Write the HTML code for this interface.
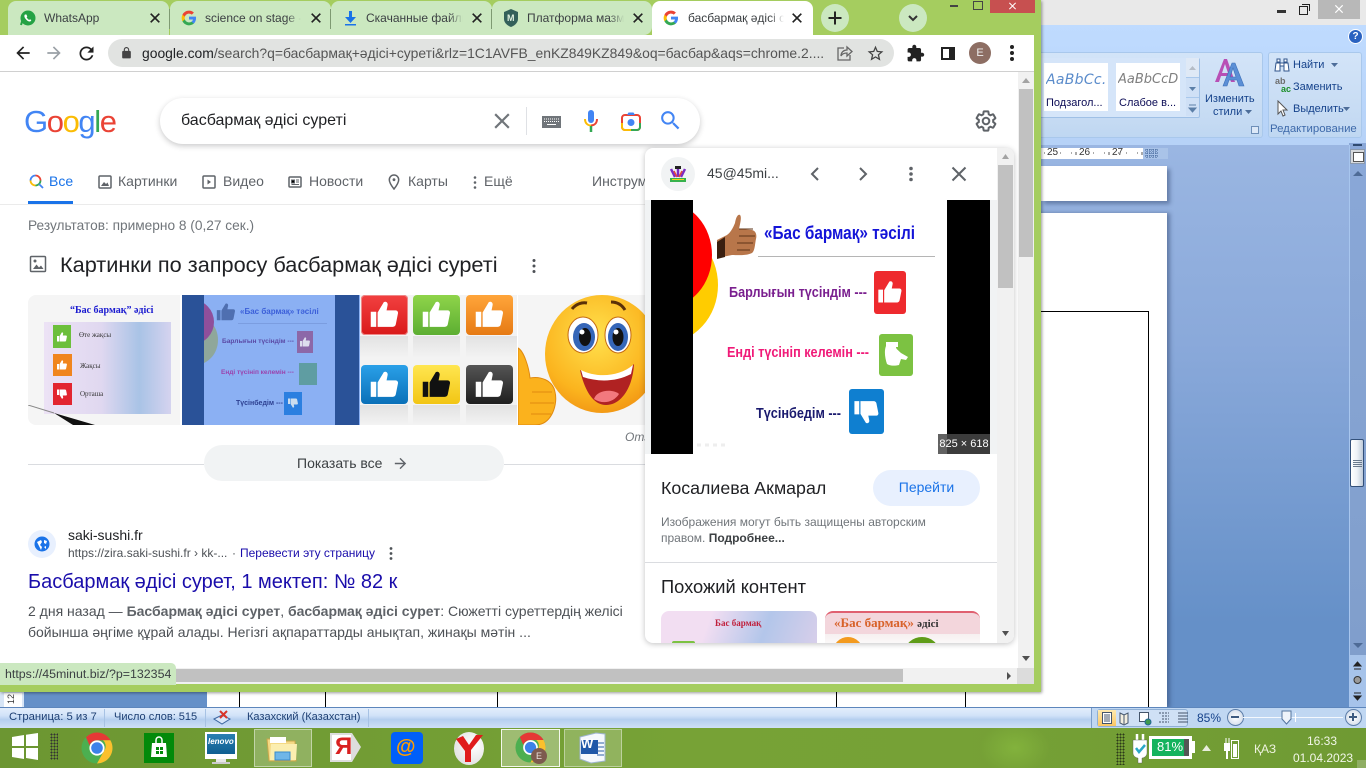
<!DOCTYPE html>
<html><head><meta charset="utf-8"><style>
html,body{margin:0;padding:0;width:1366px;height:768px;overflow:hidden;background:#fff;font-family:"Liberation Sans","Noto Sans CJK SC",sans-serif}
div,span.t,svg.a{position:absolute}
.t{position:absolute;white-space:nowrap;line-height:16px}
.r{color:#15428b;font-size:11px}
svg{display:block}
</style></head><body>
<svg width="0" height="0" style="position:absolute"><defs>
<symbol id="g" viewBox="0 0 24 24"><path fill="#4285F4" d="M22.56 12.25c0-.78-.07-1.53-.2-2.25H12v4.26h5.92c-.26 1.37-1.04 2.53-2.21 3.31v2.77h3.57c2.08-1.92 3.28-4.74 3.28-8.09z"/><path fill="#34A853" d="M12 23c2.97 0 5.46-.98 7.28-2.66l-3.57-2.77c-.98.66-2.23 1.06-3.71 1.06-2.86 0-5.29-1.93-6.16-4.53H2.18v2.84C3.99 20.53 7.7 23 12 23z"/><path fill="#FBBC05" d="M5.84 14.09c-.22-.66-.35-1.36-.35-2.09s.13-1.43.35-2.09V7.07H2.18C1.43 8.55 1 10.22 1 12s.43 3.45 1.18 4.93l2.85-2.22.81-.62z"/><path fill="#EA4335" d="M12 5.38c1.62 0 3.06.56 4.21 1.64l3.15-3.15C17.45 2.09 14.97 1 12 1 7.7 1 3.99 3.47 2.18 7.07l3.66 2.84c.87-2.6 3.3-4.53 6.16-4.53z"/></symbol>
<symbol id="x" viewBox="0 0 24 24"><path d="M19 6.41L17.59 5 12 10.59 6.41 5 5 6.41 10.59 12 5 17.59 6.41 19 12 13.41 17.59 19 19 17.59 13.41 12z"/></symbol>
<symbol id="th" viewBox="0 0 24 24"><path d="M2 10h4v11H2zM7 10.500L11.500 3c1.500-.8 3 .3 2.800 2L13.500 9H20c1.300 0 2 1 1.800 2.200l-1.600 8C20 20.300 19 21 18 21H7z"/></symbol>
<symbol id="chrome" viewBox="0 0 32 32"><circle cx="16" cy="16" r="15.500" fill="#4caf50"/><path d="M5 5.200A15.500 15.500 0 0 1 16 .5a15.500 15.500 0 0 1 13.400 7.700H16a8 8 0 0 0-7.500 5z" fill="#e53935"/><path d="M29.400 8.200A15.500 15.500 0 0 1 16 31.500L23 19a8 8 0 0 0-1-10.800z" fill="#fbc02d"/><circle cx="16" cy="16" r="7.600" fill="#fff"/><circle cx="16" cy="16" r="5.800" fill="#3b82e8"/></symbol>
</defs></svg>

<!-- WORD WINDOW -->
<div style="left:0;top:0;width:1366px;height:25px;background:#e9e9e9"></div>
<div style="left:1041px;top:25px;width:325px;height:120px;background:linear-gradient(#bfdbff,#b6d2f7)"></div>
<div style="left:1041px;top:145px;width:325px;height:563px;background:linear-gradient(#9ab6e2,#8aa9da 35%,#6590c8 85%)"></div>
<div style="left:1277px;top:10px;width:9px;height:3px;background:#333"></div>
<div style="left:1299px;top:6px;width:7px;height:7px;border:1px solid #222;background:#e9e9e9"></div>
<div style="left:1302px;top:4px;width:7px;height:6px;border:1px solid #222;border-bottom:0;border-left:0"></div>
<div style="left:1318px;top:0;width:42px;height:19px;background:#b8b8b8"></div>
<svg class="a" style="left:1332px;top:2px;fill:#fff" width="14" height="14"><use href="#x"/></svg>
<div style="left:1348px;top:29px;width:13px;height:13px;border-radius:50%;background:#2a62c0;border:1px solid #fff;color:#fff;font-size:10px;font-weight:bold;text-align:center;line-height:13px">?</div>
<!-- ribbon groups -->
<div style="left:1041px;top:52px;width:222px;height:86px;background:linear-gradient(#d3e4f8,#c6dbf3 75%,#bfd7f2);border:1px solid #a9c8ec;border-left:0;border-radius:0 3px 3px 0;box-sizing:border-box"></div>
<div style="left:1041px;top:58px;width:158px;height:59px;background:#d5e5f9;border-bottom:1px solid #9fc0e6;border-right:1px solid #9fc0e6;border-radius:0 2px 2px 0"></div>
<div style="left:1044px;top:63px;width:64px;height:48px;background:#fff"></div>
<div style="left:1116px;top:63px;width:64px;height:48px;background:#fff"></div>
<span class="t" style="left:1046px;top:72px;font:italic 14px/16px 'DejaVu Sans',sans-serif;color:#5b8ccb;width:61px;overflow:hidden;letter-spacing:.3px">AaBbCc.</span>
<span class="t" style="left:1118px;top:72px;font:italic 13px/16px 'DejaVu Sans',sans-serif;color:#7f7f7f;width:60px;overflow:hidden">AaBbCcDc</span>
<span class="t" style="left:1046px;top:95px;font-size:11px;color:#0b0b55">Подзагол...</span>
<span class="t" style="left:1119px;top:95px;font-size:11px;color:#0b0b55">Слабое в...</span>
<div style="left:1186px;top:58px;width:13px;height:19px;background:#dfe9f6;border-bottom:1px solid #a9c8ec"></div>
<div style="left:1186px;top:78px;width:13px;height:19px;background:#cfe0f6;border-bottom:1px solid #a9c8ec"></div>
<div style="left:1186px;top:98px;width:13px;height:18px;background:#cfe0f6"></div>
<svg class="a" style="left:1186px;top:58px" width="13" height="58"><path d="M3 12l3.500-4 3.500 4z" fill="#b5bcc6"/><path d="M3 29h7l-3.500 4z" fill="#5c7fa8"/><path d="M3 47h7M3 50h7l-3.500 4z" stroke="#5c7fa8" fill="#5c7fa8"/></svg>
<svg class="a" style="left:1214px;top:57px" width="34" height="32"><path d="M1 25L10 2h3l8 23h-4l-2-6H7l-2 6zM8 16h6l-3-9z" fill="#b84fb5"/><path d="M9 29L18 6h3l9 23h-5l-2-6h-8l-2 6zM16 20h6l-3-9z" fill="#5b8fd6" stroke="#3d70b8" stroke-width=".6"/></svg>
<span class="t r" style="left:1205px;top:91px">Изменить</span>
<span class="t r" style="left:1213px;top:104px">стили</span>
<svg class="a" style="left:1245px;top:110px" width="7" height="4"><path d="M0 0h7L3.500 4z" fill="#4d6d99"/></svg>
<div style="left:1251px;top:126px;width:6px;height:6px;border:1px solid #6e8fb8;background:#dce8f7"></div>
<div style="left:1268px;top:52px;width:94px;height:86px;background:linear-gradient(#d3e4f8,#c6dbf3 75%,#bfd7f2);border:1px solid #a9c8ec;border-radius:3px;box-sizing:border-box"></div>
<svg class="a" style="left:1274px;top:57px" width="16" height="15"><path d="M2 6h4v8H1zM10 6h4l1 8h-5zM3 2h3v3H3zM10 2h3v3h-3zM6 6h4v3H6z" fill="#fff" stroke="#30558c"/></svg>
<span class="t r" style="left:1293px;top:57px">Найти</span>
<svg class="a" style="left:1331px;top:63px" width="7" height="4"><path d="M0 0h7L3.500 4z" fill="#4d6d99"/></svg>
<span class="t" style="left:1275px;top:76px;font:bold 9px/10px 'Liberation Sans';color:#6d6d6d">ab</span>
<span class="t" style="left:1281px;top:84px;font:bold 9px/10px 'Liberation Sans';color:#1c8f2a">ac</span>
<span class="t r" style="left:1293px;top:79px">Заменить</span>
<svg class="a" style="left:1277px;top:100px" width="12" height="18"><path d="M1 1v13l3-3 2 5 2-1-2-5h4z" fill="#fff" stroke="#555"/></svg>
<span class="t r" style="left:1293px;top:101px">Выделить</span>
<svg class="a" style="left:1343px;top:107px" width="7" height="4"><path d="M0 0h7L3.500 4z" fill="#4d6d99"/></svg>
<span class="t" style="left:1270px;top:121px;font-size:11.400px;color:#3e6aaa">Редактирование</span>
<!-- ruler -->
<div style="left:1041px;top:148px;width:127px;height:11px;background:#fff"></div>
<div style="left:1143px;top:148px;width:25px;height:11px;background:#a9c3e8"></div>
<span class="t" style="left:1047px;top:146px;font-size:10px;color:#333;line-height:14px">25</span>
<span class="t" style="left:1079px;top:146px;font-size:10px;color:#333;line-height:14px">26</span>
<span class="t" style="left:1112px;top:146px;font-size:10px;color:#333;line-height:14px">27</span>
<svg class="a" style="left:1041px;top:148px" width="104" height="11"><path d="M3 5h1M19 5h1M30 5h1M35 4v3M44 5h1M52 5h1M63 5h1M68 4v3M77 5h1M85 5h1M96 5h1M101 4v3" stroke="#555"/></svg>
<svg class="a" style="left:1145px;top:149px" width="13" height="9"><path d="M0 1h13M0 4h13M0 7h13M2 0v9M5 0v9M8 0v9M11 0v9" stroke="#3a5f95" stroke-dasharray="1 1"/></svg>
<!-- pages -->
<div style="left:1041px;top:166px;width:126px;height:35px;background:#fff;box-shadow:3px 3px 4px rgba(40,60,100,.45)"></div>
<div style="left:0;top:213px;width:1167px;height:495px;background:#fff;box-shadow:3px 0 4px rgba(40,60,100,.45)"></div>
<div style="left:1041px;top:311px;width:107px;height:1px;background:#000"></div>
<div style="left:1148px;top:311px;width:1px;height:397px;background:#000"></div>
<div style="left:0;top:692px;width:24px;height:16px;background:#d7e5f6"></div>
<div style="left:4px;top:693px;width:18px;height:14px;background:#fff"></div>
<span class="t" style="left:6px;top:692px;font-size:9px;color:#333;transform:rotate(-90deg);line-height:14px">12</span>
<div style="left:24px;top:692px;width:183px;height:16px;background:#6590c8"></div>
<div style="left:239px;top:692px;width:1px;height:16px;background:#000"></div>
<div style="left:325px;top:692px;width:1px;height:16px;background:#000"></div>
<div style="left:497px;top:692px;width:1px;height:16px;background:#000"></div>
<div style="left:836px;top:692px;width:1px;height:16px;background:#000"></div>
<div style="left:965px;top:692px;width:1px;height:16px;background:#000"></div>
<!-- word v scrollbar -->
<div style="left:1349px;top:143px;width:17px;height:565px;background:linear-gradient(#8aa8d8,#7f9dca)"></div>
<div style="left:1349px;top:145px;width:1px;height:563px;background:#a8c6ee"></div>
<div style="left:1350px;top:149px;width:15px;height:15px;background:#d5d8dc;border:1px solid #8a99ad;box-sizing:border-box"></div>
<div style="left:1353px;top:144px;width:9px;height:2px;background:#2f4a70"></div>
<div style="left:1353px;top:152px;width:9px;height:8px;border:1px solid #555;background:#fff"></div>
<svg class="a" style="left:1351px;top:169px" width="14" height="8"><path d="M2 7l5-5 5 5z" fill="#4e6b96"/></svg>
<div style="left:1350px;top:439px;width:14px;height:48px;border:1px solid #33507a;border-radius:2px;box-sizing:border-box;background:linear-gradient(90deg,#fff,#eef2f7 50%,#bfcbd9)"></div>
<div style="left:1353px;top:460px;width:9px;height:8px;background:repeating-linear-gradient(#6b7a8d 0 1px,transparent 1px 2px)"></div>
<svg class="a" style="left:1351px;top:642px" width="14" height="8"><path d="M2 1l5 5 5-5z" fill="#4e6b96"/></svg>
<div style="left:1350px;top:655px;width:16px;height:53px;background:#a6c3ea"></div>
<svg class="a" style="left:1352px;top:659px" width="11" height="46"><path d="M2 10h7M2 7l3.500-4 3.500 4z" fill="#222" stroke="#222"/><circle cx="5.500" cy="21" r="3.500" fill="#9a9a9a" stroke="#333"/><path d="M2 34h7M2 37l3.500 4 3.500-4z" fill="#222" stroke="#222"/></svg>

<!-- STATUS BAR -->
<div style="left:0;top:707px;width:1366px;height:21px;background:linear-gradient(#5d86bc 0 1px,#e3eefc 1px,#d2e3f8 40%,#b5cfef 60%,#cfe0f6);"></div>
<span class="t r" style="left:9px;top:709px;color:#1d3f73;font-size:11.300px">Страница: 5 из 7</span>
<div style="left:104px;top:709px;width:1px;height:18px;background:#a7c2e4"></div>
<span class="t r" style="left:114px;top:709px;color:#1d3f73">Число слов: 515</span>
<div style="left:205px;top:709px;width:1px;height:18px;background:#a7c2e4"></div>
<svg class="a" style="left:213px;top:709px" width="18" height="17"><path d="M1 10l8-4 8 4-8 5z" fill="#dbe8fa" stroke="#3c66a0"/><path d="M7 2l7 7M14 2L7 9" stroke="#d8342a" stroke-width="2"/></svg>
<span class="t r" style="left:247px;top:709px;color:#1d3f73">Казахский (Казахстан)</span>
<div style="left:368px;top:709px;width:1px;height:18px;background:#a7c2e4"></div>
<div style="left:1091px;top:708px;width:275px;height:20px;background:#c0d7f2;border-left:1px solid #7b9ec9;box-sizing:border-box"></div>
<div style="left:1097px;top:709px;width:91px;height:18px;background:#cfe0f5;border:1px solid #8fafd4;border-radius:3px;box-sizing:border-box"></div>
<div style="left:1098px;top:710px;width:18px;height:16px;background:linear-gradient(#fde9b0,#fbc765)"></div>
<svg class="a" style="left:1098px;top:710px" width="90" height="16" fill="none" stroke="#44556b"><rect x="4.500" y="2.500" width="9" height="11" fill="#fff"/><path d="M6 5h6M6 7h6M6 9h6M6 11h6"/><path d="M22 3l4 2 4-2v10l-4 2-4-2zM26 5v9" fill="#f3efe0"/><rect x="41.500" y="2.500" width="9" height="9" fill="#fff"/><circle cx="50" cy="12" r="3" fill="#3f9a4e" stroke="#23679c"/><path d="M61 3h10M64 6h7M64 9h7M61 12h10" stroke-dasharray="2 1"/><path d="M80 3h10M80 6h10M80 9h10M80 12h10"/></svg>
<span class="t" style="left:1197px;top:710px;font-size:12px;color:#15428b">85%</span>
<div style="left:1227px;top:709px;width:15px;height:15px;border-radius:50%;background:radial-gradient(#fff,#c9d5e6);border:1px solid #5d7ea9"></div>
<div style="left:1231px;top:716px;width:8px;height:2px;background:#3d5a80"></div>
<div style="left:1243px;top:717px;width:100px;height:1px;background:#f4f8fd"></div>
<div style="left:1295px;top:713px;width:1px;height:9px;background:#fff"></div>
<svg class="a" style="left:1281px;top:710px" width="11" height="15"><path d="M1 1h9v8l-4.500 5L1 9z" fill="#eef3fa" stroke="#54749e"/></svg>
<div style="left:1345px;top:709px;width:15px;height:15px;border-radius:50%;background:radial-gradient(#fff,#c9d5e6);border:1px solid #5d7ea9"></div>
<div style="left:1349px;top:716px;width:8px;height:2px;background:#3d5a80"></div>
<div style="left:1352px;top:713px;width:2px;height:8px;background:#3d5a80"></div>

<!-- TASKBAR -->
<div style="left:0;top:728px;width:1366px;height:40px;background:linear-gradient(90deg,#6c9632,#77a236 50%,#76a136 70%,#6f9a33)"></div>
<div style="left:975px;top:728px;width:80px;height:40px;background:radial-gradient(ellipse 35px 26px at 50% 50%,rgba(150,205,70,.4),transparent)"></div>
<svg class="a" style="left:12px;top:733px" width="27" height="27" fill="#fff"><path d="M0 4l12-2v11H0zM14 1.700L26 0v13H14zM0 15h12v11L0 24zM14 15h12v12l-12-2z"/></svg>
<div style="left:50px;top:733px;width:8px;height:27px;background:radial-gradient(circle,#333 .8px,transparent 1px) 0 0/3px 3px"></div>
<svg class="a" style="left:81px;top:732px" width="32" height="32"><use href="#chrome"/></svg>
<div style="left:144px;top:733px;width:30px;height:30px;background:#038a0a"></div>
<svg class="a" style="left:148px;top:735px" width="22" height="26"><path d="M4 8h14l1 14H3z" fill="#fff"/><path d="M8 8V5a3 3 0 0 1 6 0v3" stroke="#fff" fill="none" stroke-width="1.500"/><path d="M8 12h3v3H8zM12 12h3v3h-3zM8 16h3v3H8zM12 16h3v3h-3z" fill="#038a0a"/></svg>
<div style="left:205px;top:732px;width:32px;height:27px;background:#fff"></div>
<div style="left:207px;top:734px;width:28px;height:20px;background:linear-gradient(#2a7fb2,#0f5f91);"></div>
<span class="t" style="left:208px;top:736px;font:italic bold 8px/12px 'Liberation Sans';color:#fff">lenovo</span>
<div style="left:216px;top:759px;width:10px;height:3px;background:#e8e8e8"></div>
<div style="left:212px;top:762px;width:18px;height:2px;background:#ccc"></div>
<div style="left:254px;top:729px;width:58px;height:38px;background:rgba(255,255,255,.22);border:1px solid rgba(255,255,255,.45);box-sizing:border-box"></div>
<svg class="a" style="left:266px;top:734px" width="34" height="28"><path d="M1 5h11l2 2h15l1 20H3z" fill="#f4d985" stroke="#c7a64a"/><path d="M4 3h16v6H4z" fill="#fff"/><path d="M5 10h26l-1 16H4z" fill="#fbeeb0"/><path d="M9 18h15v8H9z" fill="#6fb6e8" stroke="#3a8ccb"/></svg>
<svg class="a" style="left:329px;top:733px" width="33" height="29"><path d="M1 0h22l9 14-9 15H1z" fill="#ddd"/><path d="M3 2h19v25H3z" fill="#fff"/></svg>
<span class="t" style="left:335px;top:734px;font:bold 24px/26px 'Liberation Sans';color:#d92020">Я</span>
<div style="left:391px;top:732px;width:32px;height:32px;background:#005ff9;border-radius:4px"></div>
<span class="t" style="left:396px;top:734px;font:bold 20px/26px 'Liberation Sans';color:#ff9e00">@</span>
<div style="left:454px;top:732px;width:30px;height:33px;border-radius:50%;background:radial-gradient(circle at 65% 40%,#fff,#d8d8d8)"></div>
<svg class="a" style="left:454px;top:732px" width="30" height="33"><path d="M2 7l9 12v11h6V18L29 3h-7l-7 10L9 4z" fill="#e01b1b"/></svg>
<div style="left:501px;top:729px;width:59px;height:38px;background:rgba(255,255,255,.3);border:1px solid #f4f8ec;box-sizing:border-box"></div>
<svg class="a" style="left:515px;top:732px" width="31" height="31"><use href="#chrome"/></svg>
<div style="left:531px;top:748px;width:16px;height:16px;border-radius:50%;background:#7d5b4e;color:#e8e0dc;font-size:9px;line-height:16px;text-align:center">E</div>
<div style="left:564px;top:729px;width:58px;height:38px;background:rgba(255,255,255,.2);border:1px solid rgba(255,255,255,.4);box-sizing:border-box"></div>
<svg class="a" style="left:577px;top:732px" width="32" height="32"><path d="M3 5l16-4 9 1v27l-14 2-11-4z" fill="#f6f9fd" stroke="#9fb5d0"/><path d="M4 8h17v14H4z" fill="#2058a8"/><path d="M20 11h7M20 15h7M20 19h7M20 23h7" stroke="#2c5ea8"/></svg>
<span class="t" style="left:581px;top:736px;font:bold 13px/16px 'Liberation Sans';color:#fff">W</span>
<!-- tray -->
<div style="left:1116px;top:733px;width:9px;height:32px;background:radial-gradient(circle,#2c3a1a .8px,transparent 1px) 0 0/3px 3px"></div>
<svg class="a" style="left:1131px;top:733px" width="18" height="32"><path d="M6 1v7M12 1v7" stroke="#fff" stroke-width="2.500"/><path d="M2 7h14v13c0 3-3 5-5 5v5H7v-5c-2 0-5-2-5-5z" fill="#fff" stroke="#555" stroke-width=".4"/><path d="M5 15l3 4 6-7" stroke="#2aa7c8" stroke-width="2.500" fill="none"/></svg>
<div style="left:1149px;top:736px;width:43px;height:23px;background:#fff"></div>
<div style="left:1192px;top:741px;width:3px;height:12px;background:#fff"></div>
<div style="left:1152px;top:739px;width:32px;height:17px;background:#14b35d"></div>
<div style="left:1184px;top:739px;width:5px;height:17px;background:#555"></div>
<span class="t" style="left:1157px;top:739px;font-size:13px;color:#fff">81%</span>
<svg class="a" style="left:1202px;top:745px" width="9" height="6"><path d="M0 6l4.500-6L9 6z" fill="#e8eddc"/></svg>
<svg class="a" style="left:1223px;top:737px" width="16" height="23"><path d="M3 1v5M6 1v5" stroke="#fff"/><rect x="1" y="6" width="6" height="8" fill="#fff"/><path d="M4 14v8" stroke="#fff" stroke-width="2"/><rect x="8.500" y="3.500" width="7" height="18" fill="none" stroke="#fff"/><rect x="10" y="7" width="4" height="13" fill="#fff"/></svg>
<span class="t" style="left:1254px;top:741px;font-size:12px;color:#eef3e0">ҚАЗ</span>
<span class="t" style="left:1307px;top:733px;font-size:12px;color:#f2f6e8">16:33</span>
<span class="t" style="left:1293px;top:750px;font-size:12px;color:#f2f6e8">01.04.2023</span>
<div style="left:1357px;top:760px;width:9px;height:8px;background:#8fae63"></div>

<!-- CHROME WINDOW -->
<div style="left:0;top:0;width:1041px;height:692px;background:#a5cd5f;box-shadow:1px 1px 3px rgba(0,0,0,.4)"></div>
<div style="left:950px;top:5px;width:8px;height:2px;background:#444"></div>
<div style="left:973px;top:1px;width:8px;height:7px;border:1px solid #444"></div>
<div style="left:990px;top:0;width:45px;height:13px;background:#c75050"></div>
<svg class="a" style="left:1006px;top:0;fill:#fff" width="13" height="12"><use href="#x"/></svg>

<!-- tabs -->
<div style="left:8px;top:1px;width:161px;height:34px;background:#cbe8c0;border-radius:8px 8px 0 0"></div>
<div style="left:170px;top:1px;width:161px;height:34px;background:#cbe8c0;border-radius:8px 8px 0 0"></div>
<div style="left:331px;top:1px;width:161px;height:34px;background:#cbe8c0;border-radius:8px 8px 0 0"></div>
<div style="left:492px;top:1px;width:160px;height:34px;background:#cbe8c0;border-radius:8px 8px 8px 0"></div>
<div style="left:169px;top:9px;width:1px;height:20px;background:#7e9a72"></div>
<div style="left:330px;top:9px;width:1px;height:20px;background:#7e9a72"></div>
<div style="left:491px;top:9px;width:1px;height:20px;background:#7e9a72"></div>
<div style="left:652px;top:1px;width:161px;height:36px;background:#fff;border-radius:8px 8px 0 0"></div>

<svg class="a" style="left:20px;top:10px" width="16" height="16"><circle cx="8" cy="8" r="7.500" fill="#25a244"/><path d="M1 15l1.200-4" stroke="#25a244" stroke-width="2"/><path d="M5 4.500c-1 1-.8 2.500.5 4.200 1.500 2 3.200 3 4.500 2.800.8-.2 1.300-1 1.200-1.500L10 9.200l-.8.800C8.200 9.500 7 8.300 6.600 7.300l.7-.8-.9-2z" fill="#fff"/></svg>
<span class="t" style="left:44px;top:10px;font-size:12px;color:#3c4043">WhatsApp</span>
<svg class="a" style="left:147px;top:10px;fill:#222;stroke:#222;stroke-width:.6" width="16" height="16"><use href="#x"/></svg>
<svg class="a" style="left:181px;top:10px" width="16" height="16"><use href="#g"/></svg>
<span class="t" style="left:205px;top:10px;font-size:12px;color:#3c4043;width:96px;overflow:hidden;-webkit-mask-image:linear-gradient(90deg,#000 85%,transparent)">science on stage - Поиск</span>
<svg class="a" style="left:308px;top:10px;fill:#222;stroke:#222;stroke-width:.6" width="16" height="16"><use href="#x"/></svg>
<svg class="a" style="left:343px;top:10px;fill:#1a73e8" width="15" height="16"><path d="M6 1h3v6h4l-5.500 6L2 7h4zM2 14h11v1.500H2z"/></svg>
<span class="t" style="left:366px;top:10px;font-size:12px;color:#3c4043;width:97px;overflow:hidden;-webkit-mask-image:linear-gradient(90deg,#000 85%,transparent)">Скачанные файлы и папки</span>
<svg class="a" style="left:503px;top:9px" width="16" height="18"><path d="M8 0l7 3v7c0 4-4 7-7 8-3-1-7-4-7-8V3z" fill="#33605a"/></svg>
<span class="t" style="left:507px;top:12px;font:bold 9px/12px 'Liberation Sans';color:#dff0df">М</span>
<span class="t" style="left:527px;top:10px;font-size:12px;color:#3c4043;width:97px;overflow:hidden;-webkit-mask-image:linear-gradient(90deg,#000 85%,transparent)">Платформа мазмұны</span>
<svg class="a" style="left:630px;top:10px;fill:#222;stroke:#222;stroke-width:.6" width="16" height="16"><use href="#x"/></svg>
<svg class="a" style="left:469px;top:10px;fill:#222;stroke:#222;stroke-width:.6" width="16" height="16"><use href="#x"/></svg>
<svg class="a" style="left:663px;top:10px" width="16" height="16"><use href="#g"/></svg>
<span class="t" style="left:688px;top:10px;font-size:12px;color:#3c4043;width:96px;overflow:hidden;-webkit-mask-image:linear-gradient(90deg,#000 85%,transparent)">басбармақ әдісі суреті - Поиск</span>
<svg class="a" style="left:789px;top:10px;fill:#222;stroke:#222;stroke-width:.6" width="16" height="16"><use href="#x"/></svg>
<div style="left:821px;top:4px;width:28px;height:28px;border-radius:50%;background:#cbe8c0"></div>
<svg class="a" style="left:827px;top:10px" width="16" height="16"><path d="M8 1.500v13M1.500 8h13" stroke="#222" stroke-width="2"/></svg>
<div style="left:899px;top:4px;width:28px;height:28px;border-radius:50%;background:#cbe8c0"></div>
<svg class="a" style="left:907px;top:13px" width="12" height="10"><path d="M2 3l4 4 4-4" stroke="#333" stroke-width="2" fill="none"/></svg>

<!-- toolbar -->
<div style="left:0;top:35px;width:1034px;height:36px;background:#fff"></div>
<div style="left:652px;top:33px;width:161px;height:4px;background:#fff"></div>
<div style="left:0;top:71px;width:1034px;height:1px;background:#d0d0d0"></div>
<svg class="a" style="left:13px;top:43px;fill:#222" width="20" height="20" viewBox="0 0 24 24"><path d="M20 11H7.830l5.590-5.590L12 4l-8 8 8 8 1.410-1.410L7.830 13H20v-2z"/></svg>
<svg class="a" style="left:44px;top:43px;fill:#9aa0a6" width="20" height="20" viewBox="0 0 24 24"><path d="M4 11h12.170l-5.590-5.590L12 4l8 8-8 8-1.410-1.410L16.170 13H4v-2z"/></svg>
<svg class="a" style="left:76px;top:43px;fill:#222" width="21" height="21" viewBox="0 0 24 24"><path d="M17.650 6.350C16.200 4.900 14.210 4 12 4c-4.420 0-7.990 3.580-7.990 8s3.570 8 7.990 8c3.730 0 6.840-2.550 7.730-6h-2.080c-.82 2.330-3.040 4-5.650 4-3.310 0-6-2.690-6-6s2.690-6 6-6c1.660 0 3.140.69 4.220 1.780L13 11h7V4l-2.350 2.350z"/></svg>
<div style="left:108px;top:39px;width:786px;height:28px;border-radius:14px;background:#e1e3e1"></div>
<svg class="a" style="left:120px;top:46px;fill:#444" width="13" height="14" viewBox="0 0 24 24"><path d="M18 8h-1V6c0-2.760-2.240-5-5-5S7 3.240 7 6v2H6c-1.100 0-2 .9-2 2v10c0 1.100.9 2 2 2h12c1.100 0 2-.9 2-2V10c0-1.100-.9-2-2-2zM9 6c0-1.660 1.340-3 3-3s3 1.340 3 3v2H9V6z"/></svg>
<span class="t" style="left:142px;top:45px;font-size:13.900px;color:#202124">google.com<span style="color:#555">/search?q=басбармақ+әдісі+суреті&amp;rlz=1C1AVFB_enKZ849KZ849&amp;oq=басбар&amp;aqs=chrome.2....</span></span>
<svg class="a" style="left:836px;top:45px" width="17" height="17" fill="none" stroke="#666" stroke-width="1.300"><path d="M8 3H2v12h12v-5"/><path d="M5 11c0-4 3-6 6-6V2l5 4.500-5 4.500V8c-3 0-5 1-6 3z"/></svg>
<svg class="a" style="left:866px;top:44px;fill:#444" width="19" height="19" viewBox="0 0 24 24"><path d="M22 9.240l-7.190-.62L12 2 9.190 8.630 2 9.240l5.460 4.730L5.820 21 12 17.270 18.180 21l-1.630-7.030L22 9.240zM12 15.400l-3.760 2.270 1-4.280-3.320-2.880 4.380-.38L12 6.100l1.710 4.040 4.380.38-3.320 2.880 1 4.280L12 15.400z"/></svg>
<svg class="a" style="left:906px;top:44px;fill:#222" width="19" height="19" viewBox="0 0 24 24"><path d="M20.500 11H19V7c0-1.100-.9-2-2-2h-4V3.500C13 2.120 11.880 1 10.500 1S8 2.120 8 3.500V5H4c-1.100 0-1.990.9-1.990 2v3.800H3.500c1.490 0 2.700 1.210 2.700 2.700s-1.210 2.700-2.700 2.700H2V20c0 1.100.9 2 2 2h3.800v-1.500c0-1.490 1.210-2.700 2.700-2.700 1.490 0 2.700 1.210 2.700 2.700V22H17c1.100 0 2-.9 2-2v-4h1.500c1.380 0 2.500-1.120 2.500-2.500S21.880 11 20.500 11z"/></svg>
<div style="left:941px;top:47px;width:6px;height:9px;border:2px solid #222;border-right-width:6px"></div>
<div style="left:969px;top:42px;width:22px;height:22px;border-radius:50%;background:#8d6e63;color:#eee;font-size:11px;line-height:22px;text-align:center">E</div>
<svg class="a" style="left:1008px;top:44px;fill:#222" width="8" height="18"><circle cx="4" cy="3" r="2"/><circle cx="4" cy="9" r="2"/><circle cx="4" cy="15" r="2"/></svg>

<!-- PAGE -->
<div style="left:0;top:72px;width:1034px;height:612px;background:#fff;overflow:hidden">
 <div style="left:1018px;top:0;width:16px;height:596px;background:#f1f1f1"></div>
 <div style="left:1019px;top:17px;width:14px;height:168px;background:#c1c1c1"></div>
 <svg class="a" style="left:1019px;top:4px" width="14" height="8"><path d="M3 7l4-5 4 5z" fill="#a3a3a3"/></svg>
 <svg class="a" style="left:1019px;top:583px" width="14" height="8"><path d="M3 1l4 5 4-5z" fill="#505050"/></svg>

 <span class="t" style="left:24px;top:32px;font-size:31px;line-height:36px;letter-spacing:-1.400px"><span style="color:#4285f4">G</span><span style="color:#ea4335">o</span><span style="color:#fbbc05">o</span><span style="color:#4285f4">g</span><span style="color:#34a853">l</span><span style="color:#ea4335">e</span></span>
 <div style="left:160px;top:26px;width:540px;height:46px;border-radius:23px;background:#fff;box-shadow:0 2px 6px rgba(32,33,36,.24)"></div>
 <span class="t" style="left:181px;top:40px;font-size:16px;line-height:18px;color:#202124">басбармақ әдісі суреті</span>
 <svg class="a" style="left:489px;top:36px;fill:#70757a" width="26" height="26" viewBox="0 0 24 24"><use href="#x"/></svg>
 <div style="left:526px;top:35px;width:1px;height:28px;background:#dfe1e5"></div>
 <div style="left:542px;top:44px;width:19px;height:12px;background:#70757a"></div>
 <svg class="a" style="left:544px;top:46px" width="15" height="8"><path d="M0 1h15M0 3.500h15" stroke="#fff" stroke-dasharray="1 1"/><path d="M3 6.500h9" stroke="#fff"/></svg>
 <svg class="a" style="left:582px;top:37px" width="18" height="25"><rect x="6" y="1" width="6" height="13" rx="3" fill="#4285f4"/><path d="M3 10c0 4 2.500 6.500 6 6.500" stroke="#fbbc05" stroke-width="2" fill="none"/><path d="M15 10c0 4-2.500 6.500-6 6.500" stroke="#ea4335" stroke-width="2" fill="none"/><path d="M9 17v6" stroke="#34a853" stroke-width="2.500"/></svg>
 <svg class="a" style="left:620px;top:38px" width="22" height="22"><rect x="2" y="5" width="18" height="15" rx="3" fill="none" stroke="#ea4335" stroke-width="2"/><path d="M2 13v4a3 3 0 0 0 3 3h6" fill="none" stroke="#fbbc05" stroke-width="2"/><path d="M20 13v4a3 3 0 0 1-3 3h-6" fill="none" stroke="#34a853" stroke-width="2"/><path d="M7 5l1.500-2.500h5L15 5" fill="#4285f4"/><circle cx="11" cy="12.500" r="3.500" fill="#4285f4"/></svg>
 <svg class="a" style="left:658px;top:36px;fill:#4285f4" width="25" height="25" viewBox="0 0 24 24"><path d="M15.500 14h-.79l-.28-.27A6.471 6.471 0 0 0 16 9.500 6.500 6.500 0 1 0 9.500 16c1.610 0 3.090-.59 4.230-1.570l.27.28v.79l5 4.990L20.490 19l-4.990-5zm-6 0C7.010 14 5 11.990 5 9.500S7.010 5 9.500 5 14 7.010 14 9.500 11.990 14 9.500 14z"/></svg>
 <svg class="a" style="left:974px;top:37px" width="24" height="24" viewBox="0 0 24 24"><path fill="none" stroke="#5f6368" stroke-width="2" d="M19.140 12.940c.04-.3.06-.61.06-.94 0-.32-.02-.64-.07-.94l2.030-1.580c.18-.14.23-.41.12-.61l-1.920-3.320c-.12-.22-.37-.29-.59-.22l-2.390.96c-.5-.38-1.030-.7-1.620-.94l-.36-2.540c-.04-.24-.24-.41-.48-.41h-3.840c-.24 0-.43.17-.47.41l-.36 2.540c-.59.24-1.130.57-1.620.94l-2.390-.96c-.22-.08-.47 0-.59.22L2.740 8.870c-.12.21-.08.47.12.61l2.030 1.580c-.05.3-.09.63-.09.94s.02.64.07.94l-2.030 1.580c-.18.14-.23.41-.12.61l1.920 3.320c.12.22.37.29.59.22l2.390-.96c.5.38 1.030.7 1.620.94l.36 2.540c.05.24.24.41.48.41h3.840c.24 0 .44-.17.47-.41l.36-2.540c.59-.24 1.130-.56 1.620-.94l2.390.96c.22.08.47 0 .59-.22l1.920-3.320c.12-.22.07-.47-.12-.61l-2.010-1.580z"/><circle cx="12" cy="12" r="3.300" fill="none" stroke="#5f6368" stroke-width="2"/></svg>

 <!-- nav -->
 <svg class="a" style="left:29px;top:102px" width="15" height="15" fill="none" stroke-width="1.800"><path d="M6.500 1.500a5 5 0 0 1 5 5" stroke="#ea4335"/><path d="M1.500 6.500a5 5 0 0 1 5-5" stroke="#4285f4"/><path d="M1.500 6.500a5 5 0 0 0 5 5" stroke="#fbbc05"/><path d="M6.500 11.500a5 5 0 0 0 5-5" stroke="#34a853"/><path d="M10 10l4 4" stroke="#4285f4"/></svg>
 <span class="t" style="left:49px;top:101px;font-size:14px;color:#1a73e8">Все</span>
 <svg class="a" style="left:98px;top:103px" width="14" height="14"><rect x="1" y="1" width="12" height="12" rx="1" fill="none" stroke="#5f6368" stroke-width="1.500"/><path d="M3 11l3-4 2 2 1.500-1.500L11 11z" fill="#5f6368"/></svg>
 <span class="t" style="left:118px;top:101px;font-size:14px;color:#5f6368">Картинки</span>
 <svg class="a" style="left:202px;top:103px" width="14" height="14"><rect x="1" y="1" width="12" height="12" rx="1" fill="none" stroke="#5f6368" stroke-width="1.500"/><path d="M5.500 4.500v5l3.500-2.500z" fill="#5f6368"/></svg>
 <span class="t" style="left:223px;top:101px;font-size:14px;color:#5f6368">Видео</span>
 <svg class="a" style="left:288px;top:103px" width="14" height="14"><rect x="1" y="2" width="12" height="10" rx="1" fill="none" stroke="#5f6368" stroke-width="1.500"/><path d="M3.500 5h3v3h-3zM8 5h3M8 7h3M3.500 9.500h7.500" stroke="#5f6368"/></svg>
 <span class="t" style="left:309px;top:101px;font-size:14px;color:#5f6368">Новости</span>
 <svg class="a" style="left:388px;top:102px" width="12" height="16"><path d="M6 1a4.700 4.700 0 0 0-4.700 4.700C1.300 9 6 15 6 15s4.700-6 4.700-9.300A4.700 4.700 0 0 0 6 1z" fill="none" stroke="#5f6368" stroke-width="1.500"/><circle cx="6" cy="5.700" r="1.400" fill="#5f6368"/></svg>
 <span class="t" style="left:408px;top:101px;font-size:14px;color:#5f6368">Карты</span>
 <svg class="a" style="left:472px;top:103px;fill:#5f6368" width="6" height="15"><circle cx="3" cy="2.500" r="1.300"/><circle cx="3" cy="7.500" r="1.300"/><circle cx="3" cy="12.500" r="1.300"/></svg>
 <span class="t" style="left:484px;top:101px;font-size:14px;color:#5f6368">Ещё</span>
 <span class="t" style="left:592px;top:101px;font-size:14px;color:#5f6368">Инструменты</span>
 <div style="left:28px;top:129px;width:45px;height:3px;background:#1a73e8"></div>
 <div style="left:0;top:132px;width:650px;height:1px;background:#ebebeb"></div>

 <span class="t" style="left:28px;top:146px;font-size:13.700px;color:#70757a">Результатов: примерно 8 (0,27 сек.)</span>

 <svg class="a" style="left:29px;top:183px" width="18" height="18"><rect x="1.500" y="1.500" width="15" height="15" rx="1" fill="none" stroke="#5f6368" stroke-width="1.500"/><path d="M4 14l3.500-4.500 2.500 3 2-2 2.500 3.500z" fill="#5f6368"/><circle cx="6" cy="6" r="1.500" fill="#5f6368"/></svg>
 <span class="t" style="left:60px;top:181px;font-size:21.700px;line-height:24px;color:#202124">Картинки по запросу басбармақ әдісі суреті</span>
 <svg class="a" style="left:531px;top:186px;fill:#4d5156" width="6" height="16"><circle cx="3" cy="2.500" r="1.500"/><circle cx="3" cy="8" r="1.500"/><circle cx="3" cy="13.500" r="1.500"/></svg>

 <!-- thumbs -->
 <div style="left:28px;top:223px;width:152px;height:130px;background:#f5f5f5;border-radius:8px 0 0 8px;overflow:hidden">
  <div style="left:16px;top:27px;width:127px;height:92px;background:linear-gradient(90deg,#ece2f5,#e0d8f0 45%,#a9c3e6 75%,#d5d3ef)"></div>
  <span class="t" style="left:42px;top:9px;font:bold 10px/14px 'Liberation Serif';color:#1a1ad0">“Бас бармақ” әдісі</span>
  <div style="left:25px;top:30px;width:18px;height:23px;background:#6cbf3c"></div>
  <div style="left:25px;top:59px;width:19px;height:22px;background:#f0851e"></div>
  <div style="left:25px;top:88px;width:19px;height:22px;background:#e22530"></div>
  <svg class="a" style="left:28px;top:36px;fill:#fff" width="12" height="12"><use href="#th"/></svg>
  <svg class="a" style="left:28px;top:64px;fill:#fff" width="12" height="12"><use href="#th"/></svg>
  <svg class="a" style="left:28px;top:93px;fill:#fff;transform:scaleY(-1)" width="12" height="12"><use href="#th"/></svg>
  <span class="t" style="left:51px;top:34px;font:7px/12px 'Liberation Serif';color:#333">Өте жақсы</span>
  <span class="t" style="left:52px;top:65px;font:7px/12px 'Liberation Serif';color:#333">Жақсы</span>
  <span class="t" style="left:52px;top:93px;font:7px/12px 'Liberation Serif';color:#333">Орташа</span>
  <svg class="a" style="left:0;top:110px" width="70" height="20"><path d="M26 8L67 20H45z" fill="#111"/><path d="M0 0l26 8" stroke="#888"/></svg>
 </div>
 <div style="left:182px;top:223px;width:178px;height:130px;background:#8bb0f3;overflow:hidden">
  <div style="left:0;top:0;width:22px;height:130px;background:#2a5298"></div>
  <div style="left:153px;top:0;width:24px;height:130px;background:#2a5298"></div>
  <div style="left:177px;top:0;width:1px;height:130px;background:#8bb0f3"></div>
  <div style="left:-10px;top:20px;width:46px;height:50px;border-radius:50%;background:#8fa79b;clip-path:inset(0 0 0 32px)"></div>
  <div style="left:-10px;top:5px;width:42px;height:44px;border-radius:50%;background:#8f4f9b;clip-path:inset(0 0 0 32px)"></div>
  <svg class="a" style="left:33px;top:5px;fill:#4f6fb0" width="22" height="24"><use href="#th"/></svg>
  <span class="t" style="left:58px;top:10px;font:bold 8px/14px 'Liberation Sans';color:#3b5fd9">«Бас бармақ» тәсілі</span>
  <div style="left:56px;top:28px;width:89px;height:1px;background:#7b9de0"></div>
  <span class="t" style="left:40px;top:41px;font:bold 6.600px/12px 'Liberation Sans';color:#5a4aa6">Барлығын түсіндім ---</span>
  <div style="left:115px;top:36px;width:16px;height:22px;background:#8c68a8"></div>
  <svg class="a" style="left:117px;top:41px;fill:#dde" width="12" height="12"><use href="#th"/></svg>
  <span class="t" style="left:39px;top:72px;font:bold 6.500px/12px 'Liberation Sans';color:#9a43ad">Енді түсініп келемін ---</span>
  <div style="left:117px;top:68px;width:18px;height:22px;background:#5f9da2"></div>
  <span class="t" style="left:54px;top:103px;font:bold 7px/12px 'Liberation Sans';color:#2c3f90">Түсінбедім ---</span>
  <div style="left:102px;top:97px;width:18px;height:23px;background:#2b7fe0"></div>
  <svg class="a" style="left:105px;top:102px;fill:#cde;transform:scaleY(-1)" width="12" height="12"><use href="#th"/></svg>
 </div>
 <div style="left:360px;top:223px;width:157px;height:130px;background:#f3f3f3;overflow:hidden">
  <div style="left:1px;top:0;width:47px;height:40px;background:linear-gradient(#f24040,#d91a1a);border-radius:4px;box-shadow:inset 0 0 0 1px #e88"></div>
  <div style="left:53px;top:0;width:47px;height:40px;background:linear-gradient(#8fd44a,#5cae32);border-radius:4px"></div>
  <div style="left:106px;top:0;width:47px;height:40px;background:linear-gradient(#ffa53a,#e67a14);border-radius:4px"></div>
  <div style="left:1px;top:70px;width:47px;height:39px;background:linear-gradient(#2aa0e8,#0a70b8);border-radius:4px"></div>
  <div style="left:53px;top:70px;width:47px;height:39px;background:linear-gradient(#ffe650,#f2c514);border-radius:4px"></div>
  <div style="left:106px;top:70px;width:47px;height:39px;background:linear-gradient(#555,#1f1f1f);border-radius:4px"></div>
  <svg class="a" style="left:8px;top:3px;fill:#fff" width="33" height="33"><use href="#th"/></svg>
  <svg class="a" style="left:60px;top:3px;fill:#fff" width="33" height="33"><use href="#th"/></svg>
  <svg class="a" style="left:113px;top:3px;fill:#fff" width="33" height="33"><use href="#th"/></svg>
  <svg class="a" style="left:8px;top:73px;fill:#fff" width="33" height="33"><use href="#th"/></svg>
  <svg class="a" style="left:60px;top:73px;fill:#111" width="33" height="33"><use href="#th"/></svg>
  <svg class="a" style="left:113px;top:73px;fill:#fff" width="33" height="33"><use href="#th"/></svg>
  <div style="left:0;top:41px;width:157px;height:22px;background:linear-gradient(#e2e2e2,#f3f3f3)"></div>
  <div style="left:0;top:110px;width:157px;height:20px;background:linear-gradient(#e2e2e2,#f3f3f3)"></div>
  <div style="left:48px;top:41px;width:5px;height:22px;background:#f3f3f3"></div>
  <div style="left:100px;top:41px;width:6px;height:22px;background:#f3f3f3"></div>
  <div style="left:48px;top:110px;width:5px;height:20px;background:#f3f3f3"></div>
  <div style="left:100px;top:110px;width:6px;height:20px;background:#f3f3f3"></div>
 </div>
 <div style="left:518px;top:223px;width:130px;height:130px;background:#f5f5f5;overflow:hidden">
  <svg width="130" height="130"><defs><radialGradient id="fc" cx=".45" cy=".35" r=".75"><stop offset="0" stop-color="#ffe14d"/><stop offset=".65" stop-color="#fbb41e"/><stop offset="1" stop-color="#ee8a10"/></radialGradient></defs>
  <ellipse cx="84" cy="59" rx="57" ry="59" fill="url(#fc)"/>
  <path d="M54 14c4-5 10-7 15-6M93 7c6 0 11 3 14 8" stroke="#5a3008" stroke-width="3" fill="none"/>
  <ellipse cx="65" cy="40" rx="15" ry="18" fill="#fff" stroke="#c56a10"/><ellipse cx="100" cy="40" rx="13" ry="18" fill="#fff" stroke="#c56a10"/>
  <ellipse cx="66" cy="42" rx="11" ry="14" fill="#3566b8"/><ellipse cx="100" cy="42" rx="10" ry="14" fill="#3566b8"/><ellipse cx="67" cy="42" rx="6" ry="9" fill="#111"/><ellipse cx="100" cy="42" rx="5.500" ry="9" fill="#111"/><circle cx="64" cy="37" r="2.500" fill="#fff"/><circle cx="98" cy="37" r="2.500" fill="#fff"/>
  <path d="M62 75c15 9 40 8 54-6-1 22-12 41-28 41-14 0-22-17-26-35z" fill="#b02222"/><path d="M63 75c15 8 38 7 52-5l-2 9c-15 8-33 8-48 3z" fill="#fff"/><path d="M76 104c3-10 20-10 25-5-5 8-16 11-25 5z" fill="#f2797e"/>
  <path d="M0 53c6 3 11 20 12 30 10-2 23 2 25 14 3 12-3 33-20 33H0z" fill="#fbb21d" stroke="#e08a10"/><path d="M14 97h20M12 108h24M13 119h20" stroke="#e08a10"/>
  </svg>
 </div>
 <span class="t" style="left:625px;top:357px;font:italic 12px/16px 'Liberation Sans';color:#70757a">Отзыв</span>
 <div style="left:28px;top:392px;width:176px;height:1px;background:#dadce0"></div>
 <div style="left:504px;top:392px;width:146px;height:1px;background:#dadce0"></div>
 <div style="left:204px;top:373px;width:300px;height:36px;border-radius:18px;background:#f1f3f4"></div>
 <span class="t" style="left:297px;top:383px;font-size:14px;color:#3c4043">Показать все</span>
 <svg class="a" style="left:392px;top:383px;fill:#5f6368" width="17" height="17" viewBox="0 0 24 24"><path d="M4 11h12.170l-5.590-5.590L12 4l8 8-8 8-1.410-1.410L16.170 13H4v-2z"/></svg>

 <!-- result -->
 <div style="left:28px;top:458px;width:28px;height:28px;border-radius:50%;background:#e8f0fe"></div>
 <svg class="a" style="left:34px;top:464px" width="16" height="16"><circle cx="8" cy="8" r="7.500" fill="#1a73e8"/><path d="M3 6l4-2 1 2-2 3 2 2-1 3M10 4l3 1-1 3-2-1zM10 11l2-1 0 3z" fill="#fff"/></svg>
 <span class="t" style="left:68px;top:455px;font-size:14px;color:#202124">saki-sushi.fr</span>
 <span class="t" style="left:68px;top:473px;font-size:12px;color:#4d5156">https://zira.saki-sushi.fr › kk-...</span>
 <span class="t" style="left:232px;top:473px;font-size:12px;color:#4d5156">·</span>
 <span class="t" style="left:240px;top:473px;font-size:12px;color:#1a0dab">Перевести эту страницу</span>
 <svg class="a" style="left:388px;top:474px;fill:#4d5156" width="6" height="16"><circle cx="3" cy="2.500" r="1.400"/><circle cx="3" cy="7.500" r="1.400"/><circle cx="3" cy="12.500" r="1.400"/></svg>
 <span class="t" style="left:28px;top:498px;font-size:20px;line-height:24px;color:#1a0dab">Басбармақ әдісі сурет, 1 мектеп: № 82 к</span>
 <span class="t" style="left:28px;top:530px;font-size:14px;line-height:18px;color:#4d5156">2 дня назад — <b style="color:#5f6368">Басбармақ әдісі сурет</b>, <b style="color:#5f6368">басбармақ әдісі сурет</b>: Сюжетті суреттердің желісі</span>
 <span class="t" style="left:28px;top:551px;font-size:14px;line-height:18px;color:#4d5156">бойынша әңгіме құрай алады. Негізгі ақпараттарды анықтап, жинақы мәтін ...</span>
 <span class="t" style="left:28px;top:594px;font-size:20px;line-height:24px;color:#1a0dab">Басбармақ әдісі сурет Ұлы</span>

 <!-- horizontal scrollbar -->
 <div style="left:0;top:596px;width:1017px;height:16px;background:#f1f1f1"></div>
 <div style="left:176px;top:597px;width:727px;height:13px;background:#c1c1c1"></div>
 <svg class="a" style="left:1005px;top:599px" width="8" height="10"><path d="M2 1l4 4-4 4z" fill="#505050"/></svg>
 <div style="left:1017px;top:596px;width:17px;height:16px;background:#dcdcdc"></div>
</div>
<!-- tooltip -->
<div style="left:0;top:663px;width:176px;height:22px;background:#cbe8c0;border-radius:0 5px 0 0"></div>
<span class="t" style="left:5px;top:666px;font-size:12.400px;color:#3c4043">https://45minut.biz/?p=132354</span>

<!-- PANEL -->
<div style="left:645px;top:148px;width:369px;height:495px;background:#fff;border-radius:8px;box-shadow:0 1px 6px rgba(32,33,36,.28);overflow:hidden">
 <div style="left:352px;top:0;width:17px;height:495px;background:#f1f1f1"></div>
 <div style="left:353px;top:17px;width:15px;height:123px;background:#c1c1c1"></div>
 <svg class="a" style="left:354px;top:4px" width="13" height="8"><path d="M3 7l3.500-5L10 7z" fill="#a3a3a3"/></svg>
 <svg class="a" style="left:354px;top:482px" width="13" height="8"><path d="M3 1l3.500 5L10 1z" fill="#505050"/></svg>
 <div style="left:0;top:52px;width:352px;height:254px;background:#f1f3f4"></div>
 <div style="left:16px;top:9px;width:34px;height:34px;border-radius:50%;background:#f1f3f4"></div>
 <svg class="a" style="left:23px;top:16px" width="20" height="20"><path d="M7 2h6v3H7z" fill="#222"/><path d="M3 5l4 8M17 5l-4 8M10 5v8" stroke="#7c2dc4" stroke-width="2.500"/><path d="M6 7l3 6M14 7l-3 6" stroke="#e8483a" stroke-width="1.500"/><path d="M2 14h16v4H2z" fill="#37b24d"/><path d="M4 15h12v1H4z" fill="#f2d21c"/></svg>
 <span class="t" style="left:62px;top:17px;font-size:14px;color:#3c4043">45@45mi...</span>
 <svg class="a" style="left:162px;top:17px" width="16" height="18"><path d="M11 3L5 9l6 6" fill="none" stroke="#5f6368" stroke-width="2"/></svg>
 <svg class="a" style="left:210px;top:17px" width="16" height="18"><path d="M5 3l6 6-6 6" fill="none" stroke="#5f6368" stroke-width="2"/></svg>
 <svg class="a" style="left:263px;top:18px;fill:#5f6368" width="6" height="16"><circle cx="3" cy="2.500" r="1.800"/><circle cx="3" cy="8" r="1.800"/><circle cx="3" cy="13.500" r="1.800"/></svg>
 <svg class="a" style="left:304px;top:16px" width="20" height="20"><path d="M3.500 3.500l13 13M16.500 3.500l-13 13" stroke="#5f6368" stroke-width="2"/></svg>
 <!-- main image -->
 <svg class="a" style="left:6px;top:52px" width="339" height="254">
  <rect width="339" height="254" fill="#fff"/>
  <defs><clipPath id="cp"><rect x="42" y="0" width="60" height="254"/></clipPath></defs>
  <g clip-path="url(#cp)"><ellipse cx="14" cy="85" rx="53" ry="58" fill="#fc0"/><ellipse cx="14" cy="55" rx="47" ry="53" fill="#f00"/></g>
  <rect width="42" height="254" fill="#000"/><rect x="296" width="43" height="254" fill="#000"/>
  <path d="M66 58V40l8-4c5-2 8-8 10-13 1-6 3-9 5-8 2 2 0 9-1 14l13 1c4 1 5 5 4 9s-1 12-4 14c-6 3-15 2-20 2-5 1-10 2-15 3z" fill="#b8764a"/><path d="M88 29h14M88 36h16M86 43h16M86 50h13" stroke="#5e3418"/><path d="M66 42l8-5v20l-8 2z" fill="#3a1f10"/>
  <text x="113" y="39" font-family="Liberation Sans" font-weight="bold" font-size="18" fill="#1414d8" textLength="151" lengthAdjust="spacingAndGlyphs">«Бас бармақ» тәсілі</text>
  <rect x="107" y="56" width="177" height="1" fill="#b5b5b5"/>
  <text x="78" y="97" font-family="Liberation Sans" font-weight="bold" font-size="15" fill="#7a1f8f" textLength="138" lengthAdjust="spacingAndGlyphs">Барлығын түсіндім ---</text>
  <rect x="223" y="71" width="32" height="43" rx="3" fill="#ee2a2e"/>
  <use href="#th" x="225" y="78" width="28" height="28" fill="#fff"/>
  <text x="76" y="157" font-family="Liberation Sans" font-weight="bold" font-size="15" fill="#f01a78" textLength="142" lengthAdjust="spacingAndGlyphs">Енді түсініп келемін ---</text>
  <rect x="228" y="134" width="34" height="42" rx="3" fill="#7cc242"/>
  <path d="M235 142h12v5h-2c0 2 2 3 5 6l7 4-2 3-5-1-2 6c-4 1-9 1-12-1-2-6-3-13-1-18z" fill="#fff"/>
  <text x="105" y="218" font-family="Liberation Sans" font-weight="bold" font-size="15" fill="#1a1a6e" textLength="85" lengthAdjust="spacingAndGlyphs">Түсінбедім ---</text>
  <rect x="198" y="189" width="35" height="45" rx="3" fill="#0f7fd0"/>
  <use href="#th" x="201" y="197" width="29" height="30" fill="#fff" transform="matrix(1 0 0 -1 0 424)"/>
  <path d="M46 245h4M54 245h4M62 245h4M70 245h4" stroke="#eee" stroke-width="3"/>
 </svg>
 <div style="left:293px;top:286px;width:52px;height:20px;background:rgba(70,70,70,.85);color:#fff;font-size:11px;line-height:20px;text-align:center">825 × 618</div>

 <span class="t" style="left:16px;top:331px;font-size:17.800px;line-height:18px;color:#202124">Косалиева Акмарал</span>
 <div style="left:228px;top:322px;width:107px;height:36px;border-radius:18px;background:#e8f0fe;color:#1a73e8;font-size:14px;line-height:35px;text-align:center">Перейти</div>
 <span class="t" style="left:16px;top:366px;font-size:12px;color:#70757a">Изображения могут быть защищены авторским</span>
 <span class="t" style="left:16px;top:382px;font-size:12px;color:#70757a">правом. <b style="color:#3c4043">Подробнее...</b></span>
 <div style="left:0;top:414px;width:352px;height:1px;background:#dadce0"></div>
 <span class="t" style="left:16px;top:430px;font-size:18.300px;line-height:18px;color:#202124">Похожий контент</span>
 <div style="left:16px;top:463px;width:156px;height:40px;border-radius:8px 8px 0 0;background:linear-gradient(110deg,#f2def2 30%,#b3c6ea 65%,#d9cfea);overflow:hidden">
  <span class="t" style="left:54px;top:6px;font:bold 9px/12px 'Liberation Serif';color:#c0203c">Бас бармақ</span>
  <div style="left:11px;top:30px;width:23px;height:12px;background:#7cc242;border-radius:2px"></div>
 </div>
 <div style="left:180px;top:463px;width:155px;height:40px;border-radius:8px 8px 0 0;background:linear-gradient(#f3d6dc 0,#f3d6dc 21px,#f6f0f0 21px,#fff);border-top:2px solid #e06070;box-sizing:border-box;overflow:hidden">
  <span class="t" style="left:9px;top:2px;font:bold 13px/16px 'Liberation Serif';color:#d8622a">«Бас бармақ» <span style="font-size:11px;color:#333">әдісі</span></span>
  <div style="left:8px;top:24px;width:30px;height:30px;border-radius:50%;background:#f39a1f"></div>
  <div style="left:80px;top:24px;width:34px;height:30px;border-radius:50%;background:#5f9c18"></div>
 </div>
</div>
</body></html>
